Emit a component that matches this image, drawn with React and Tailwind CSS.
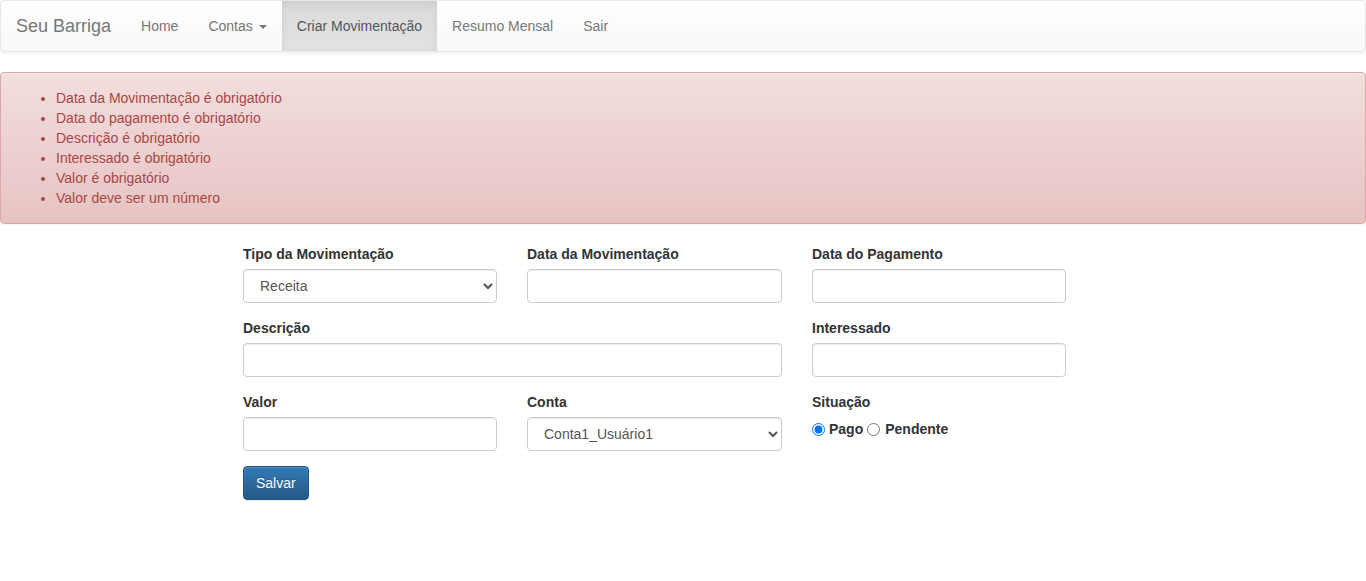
import { useState } from 'react';

const font = "font-['Liberation_Sans',Arial,sans-serif]";

const errors = [
  'Data da Movimentação é obrigatório',
  'Data do pagamento é obrigatório',
  'Descrição é obrigatório',
  'Interessado é obrigatório',
  'Valor é obrigatório',
  'Valor deve ser um número',
];

const inputClass =
  'block w-full h-[34px] px-3 py-[6px] text-[14px] text-[#555] bg-white border border-[#ccc] rounded-[4px] shadow-[inset_0_1px_1px_rgba(0,0,0,0.075)] outline-none';

function Field({ label, children, className = '' }) {
  return (
    <div className={`mb-[15px] ${className}`}>
      <label className="block mb-[5px] font-bold text-[14px] leading-5 text-[#333]">{label}</label>
      {children}
    </div>
  );
}

export default function App() {
  const [situacao, setSituacao] = useState('pago');

  return (
    <div className={`${font} text-[14px] leading-5 text-[#333] bg-white min-h-[581px]`}>
      {/* navbar */}
      <nav className="flex h-[52px] mb-5 border border-[#e7e7e7] rounded-[4px] bg-linear-to-b from-white to-[#f8f8f8] shadow-[0_1px_5px_rgba(0,0,0,0.075)]">
        <a className="px-[15px] py-[15px] text-[18px] leading-5 text-[#777]">Seu Barriga</a>
        <ul className="flex">
          <li className="px-[15px] py-[15px] text-[#777]">Home</li>
          <li className="px-[15px] py-[15px] text-[#777] flex items-center">
            Contas
            <span className="inline-block ml-[6px] mt-[2px] w-0 h-0 border-t-4 border-t-[#777] border-x-4 border-x-transparent" />
          </li>
          <li className="px-[15px] py-[15px] text-[#555] bg-linear-to-b from-[#dbdbdb] to-[#e2e2e2] shadow-[inset_0_3px_9px_rgba(0,0,0,0.075)]">
            Criar Movimentação
          </li>
          <li className="px-[15px] py-[15px] text-[#777]">Resumo Mensal</li>
          <li className="px-[15px] py-[15px] text-[#777]">Sair</li>
        </ul>
      </nav>

      {/* errors */}
      <div className="mb-5 p-[15px] border border-[#dca7a7] rounded-[4px] bg-linear-to-b from-[#f2dede] to-[#e7c3c3] text-[#a94442] shadow-[inset_0_1px_0_rgba(255,255,255,0.25),0_1px_2px_rgba(0,0,0,0.05)] [text-shadow:0_1px_0_rgba(255,255,255,0.2)]">
        <ul className="list-disc pl-10">
          {errors.map((e) => (
            <li key={e}>{e}</li>
          ))}
        </ul>
      </div>

      {/* form */}
      <form className="ml-[243px] w-[823px]" onSubmit={(e) => e.preventDefault()}>
        <div className="grid grid-cols-[254px_255px_254px] gap-x-[30px]">
          <Field label="Tipo da Movimentação">
            <select className={inputClass} defaultValue="REC">
              <option value="REC">Receita</option>
              <option value="DESP">Despesa</option>
            </select>
          </Field>
          <Field label="Data da Movimentação">
            <input className={inputClass} type="text" />
          </Field>
          <Field label="Data do Pagamento">
            <input className={inputClass} type="text" />
          </Field>

          <Field label="Descrição" className="col-span-2">
            <input className={inputClass} type="text" />
          </Field>
          <Field label="Interessado">
            <input className={inputClass} type="text" />
          </Field>

          <Field label="Valor">
            <input className={inputClass} type="text" />
          </Field>
          <Field label="Conta">
            <select className={inputClass} defaultValue="1">
              <option value="1">Conta1_Usuário1</option>
            </select>
          </Field>
          <div className="mb-[15px]">
            <label className="block mb-[5px] font-bold leading-5">Situação</label>
            <div className="flex items-center font-bold leading-5 pt-[2px]">
              <input
                type="radio"
                name="situacao"
                className="m-0 mr-1 w-[13px] h-[13px]"
                checked={situacao === 'pago'}
                onChange={() => setSituacao('pago')}
              />
              <span className="mr-1">Pago</span>
              <input
                type="radio"
                name="situacao"
                className="m-0 mr-[5px] w-[13px] h-[13px]"
                checked={situacao === 'pendente'}
                onChange={() => setSituacao('pendente')}
              />
              <span>Pendente</span>
            </div>
          </div>
        </div>

        <button
          type="submit"
          className="h-[34px] px-3 text-white border border-[#245580] rounded-[4px] bg-linear-to-b from-[#337ab7] to-[#265a88] [text-shadow:0_-1px_0_rgba(0,0,0,0.2)] shadow-[inset_0_1px_0_rgba(255,255,255,0.15),0_1px_1px_rgba(0,0,0,0.075)]"
        >
          Salvar
        </button>
      </form>
    </div>
  );
}
